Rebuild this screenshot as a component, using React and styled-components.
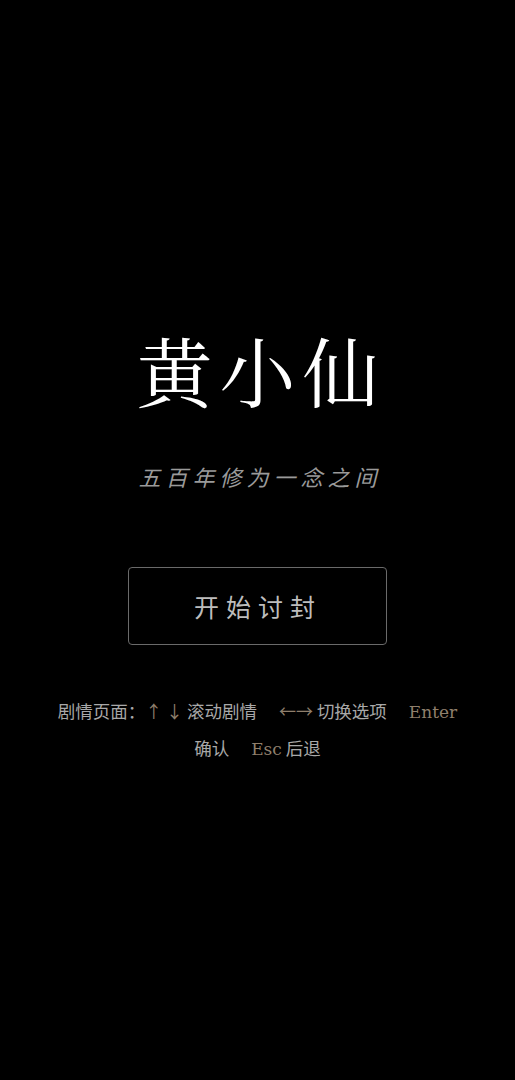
import styled, { createGlobalStyle } from "styled-components";

const Global = createGlobalStyle`
    html, body {
        margin : 0;
        padding : 0;
        background-color : #000;
    }
`;

const Screen = styled.div`
    background-color : #000;
    height : 100vh;
    display : flex;
    flex-direction : column;
    align-items : center;
    justify-content : center;
    padding-top : 18px;
    box-sizing : border-box;
`;

const Title = styled.h1`
    margin : 0;
    font-family : "Noto Serif CJK SC", "Liberation Serif", "Noto Sans CJK SC", serif;
    font-weight : 400;
    font-size : 76px;
    line-height : 1;
    letter-spacing : 7px;
    padding-left : 7px;
    color : #fff;
`;

const Subtitle = styled.p`
    margin : 52px 0 0;
    font-family : "Noto Sans CJK SC", sans-serif;
    font-style : italic;
    font-size : 22px;
    letter-spacing : 5px;
    padding-left : 5px;
    color : #9a9a9a;
`;

const StartButton = styled.button`
    margin-top : 75px;
    width : 259px;
    height : 78px;
    background : transparent;
    border : 1px solid #6a6a6a;
    border-radius : 4px;
    color : #bdbdbd;
    font-family : "Noto Sans CJK SC", sans-serif;
    font-size : 25px;
    letter-spacing : 7px;
    padding-left : 7px;
    cursor : pointer;
`;

const Hints = styled.p`
    margin : 48px 0 0;
    width : 420px;
    text-align : center;
    font-family : "Noto Sans CJK SC", sans-serif;
    font-size : 17.5px;
    line-height : 35px;
    color : #a8a8a8;
`;

const Label = styled.span`
    white-space : nowrap;
`;

const Key = styled.span`
    white-space : nowrap;
    color : #8f7f6c;
    font-family : ${p => p.latin ? `"DejaVu Serif", "Liberation Serif", serif` : `"Noto Sans CJK SC", sans-serif`};
    font-size : 17px;
    margin-left : ${p => p.gap ? "18px" : "0"};
`;

const App = () => {
  return (
    <Screen>
        <Global/>
        <Title>黄小仙</Title>
        <Subtitle>五百年修为一念之间</Subtitle>
        <StartButton>开始讨封</StartButton>
        <Hints>
            <Label>剧情页面：</Label><Key>↑ ↓</Key> <Label>滚动剧情</Label> <Key gap>←→</Key> <Label>切换选项</Label> <Key gap latin>Enter</Key> <Label>确认</Label> <Key gap latin>Esc</Key> <Label>后退</Label>
        </Hints>
    </Screen>
  )
}

export default App
